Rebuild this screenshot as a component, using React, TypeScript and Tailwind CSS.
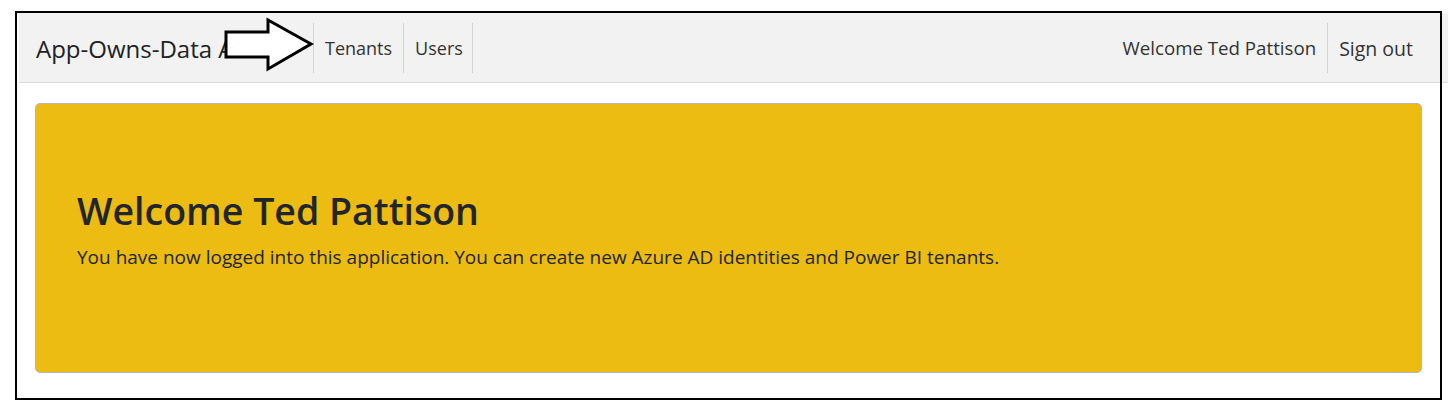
import React from "react";

const font = { fontFamily: '"Open Sans", "Noto Sans", Arial, sans-serif' };

function Arrow() {
  return (
    <svg
      className="pointer-events-none absolute left-0 top-0"
      width="300"
      height="70"
      viewBox="0 0 300 70"
    >
      <polygon
        points="207,19 249,19 249,7 292,31 249,56 249,44 207,44"
        fill="#fff"
        stroke="#000"
        strokeWidth="3"
        strokeLinejoin="miter"
      />
    </svg>
  );
}

function NavItem({ label, sep = true, size = "text-[18px]" }: { label: string; sep?: boolean; size?: string }) {
  return (
    <a className={`flex h-[50px] items-center px-[11px] pt-[2px] ${size} text-[#333] ${sep ? "border-l border-[#d2d2d2]" : ""}`}>
      {label}
    </a>
  );
}

export default function App() {
  return (
    <div className="min-h-screen bg-white pl-[15px] pt-[11px]" style={font}>
      <div className="relative h-[389px] w-[1427px] after:pointer-events-none after:absolute after:inset-0 after:border-2 after:border-black">
        <div className="pt-[2px]">
          <nav className="relative ml-[4px] flex h-[70px] w-[1429px] items-center border-b border-[#dcdcdc] bg-[#f2f2f2] pl-[17px] pr-[24px]">
            <span className="w-[277px] whitespace-nowrap pt-[2px] text-[24px] text-[#222]">App-Owns-Data Admin</span>
            <NavItem label="Tenants" />
            <a className="flex h-[50px] items-center border-l border-[#d2d2d2] pl-[11px] pr-[9px] pt-[2px] text-[18px] text-[#333]">Users</a>
            <div className="h-[50px] border-l border-[#d2d2d2]" />
            <div className="flex-1" />
            <NavItem label="Welcome Ted Pattison" sep={false} size="text-[18.7px]" />
            <NavItem label="Sign out" size="text-[19.5px]" />
            <Arrow />
          </nav>
          <div className="pl-[20px] pt-[20px]">
            <div className="flex h-[270px] w-[1387px] flex-col justify-center rounded-[5px] border border-[#b5b5b5] bg-[#ecbc13] pb-[16px] pl-[41px] text-[#222529]">
              <h1 className="text-[37.5px] font-semibold leading-[1.2]">Welcome Ted Pattison</h1>
              <p className="mt-[10px] text-[19px]">
                You have now logged into this application. You can create new Azure AD identities and Power BI tenants.
              </p>
            </div>
          </div>
        </div>
      </div>
    </div>
  );
}
